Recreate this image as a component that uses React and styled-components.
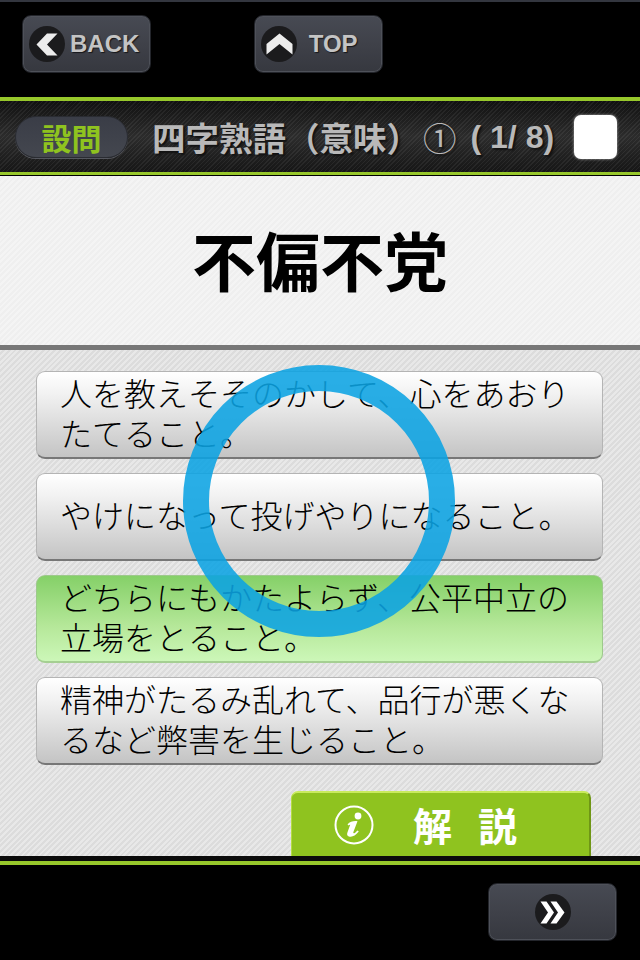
import React from 'react';
import styled, { createGlobalStyle } from 'styled-components';

const GlobalStyle = createGlobalStyle`
  html, body {
    margin: 0;
    padding: 0;
    background: #000;
  }
  * {
    box-sizing: border-box;
  }
`;

const JP = `"Noto Sans CJK JP", "Liberation Sans", sans-serif`;

const Screen = styled.div`
  position: relative;
  width: 640px;
  height: 960px;
  display: flex;
  flex-direction: column;
  overflow: hidden;
  background: #000;
  font-family: ${JP};
`;

const TopBar = styled.div`
  height: 97px;
  flex: none;
  display: flex;
  gap: 103px;
  padding: 13px 0 0 22px;
  background: #000;
  border-top: 2px solid #33363f;
`;

const NavButton = styled.div`
  width: 129px;
  height: 58px;
  display: flex;
  align-items: center;
  justify-content: ${(p) => (p.$center ? 'center' : 'flex-start')};
  gap: 5px;
  padding-left: ${(p) => (p.$center ? '0' : '6px')};
  border-radius: 9px;
  border: 1px solid #23252b;
  background: linear-gradient(#474a53, #3f4149 50%, #36383f);
  box-shadow: inset 0 0 0 1px #4e5159;
`;

const NavDisc = styled.span`
  width: 36px;
  height: 36px;
  flex: none;
  display: flex;
  align-items: center;
  justify-content: center;
  border-radius: 50%;
  background: #1b1b1d;
`;

const NavLabel = styled.span`
  font-family: "Liberation Sans", sans-serif;
  font-size: 24px;
  font-weight: 700;
  color: #c4c4c4;
  text-shadow: 1px 1px 1px #16171a;
`;

const GreenRule = styled.div`
  height: ${(p) => p.$h || 3}px;
  flex: none;
  background: #97c72b;
`;

const Header = styled.div`
  height: 71px;
  flex: none;
  display: flex;
  align-items: center;
  padding: 0 23px 0 15px;
  background:
    repeating-linear-gradient(135deg, rgba(255, 255, 255, 0.06) 0 1px, transparent 1px 3px),
    linear-gradient(#111, #2c2c2c 50%, #161616);
`;

const Pill = styled.span`
  width: 113px;
  height: 42px;
  flex: none;
  display: flex;
  align-items: center;
  justify-content: center;
  border-radius: 21px;
  border: 1px solid #2a2c32;
  background: linear-gradient(#3a3d47, #44474f);
  box-shadow: 0 1px 0 #55575e;
  color: #8fc31f;
  font-size: 30px;
  font-weight: 700;
  line-height: 1;
`;

const HeaderTitle = styled.span`
  margin-left: 24px;
  flex: 1;
  display: flex;
  align-items: center;
  white-space: nowrap;
  font-size: 33.5px;
  font-weight: 700;
  line-height: 1;
  color: #b9b9b9;
  text-shadow: 2px 2px 2px #111;
`;

const CircledNumber = styled.span`
  margin-left: 3px;
  font-weight: 400;
`;

const Counter = styled.span`
  margin-left: 14px;
  font-family: "Liberation Sans", sans-serif;
  font-size: 32px;
`;

const CheckBox = styled.span`
  width: 43px;
  height: 44px;
  flex: none;
  border-radius: 7px;
  background: #fff;
  box-shadow: 0 0 3px rgba(255, 255, 255, 0.6);
`;

const HeaderGap = styled.div`
  height: 1px;
  flex: none;
  background: #000;
`;

const Question = styled.div`
  height: 174px;
  flex: none;
  display: flex;
  align-items: center;
  justify-content: center;
  padding-bottom: 6px;
  border-bottom: 5px solid #777;
  background: repeating-linear-gradient(135deg, #f4f4f4 0 2px, #efefef 2px 4px);
  font-size: 64px;
  font-weight: 700;
  line-height: 1;
  color: #000;
`;

const Content = styled.div`
  flex: 1;
  display: flex;
  flex-direction: column;
  padding: 21px 36px 0;
  background: repeating-linear-gradient(135deg, #e8e8e8 0 2px, #dcdcdc 2px 4px);
`;

const AnswerList = styled.div`
  display: flex;
  flex-direction: column;
  gap: 14px;
`;

const Answer = styled.div`
  width: 567px;
  height: 88px;
  display: flex;
  align-items: center;
  padding: 0 22px 6px 23px;
  border-radius: 9px;
  border: 1px solid ${(p) => (p.$correct ? '#9dc98b' : '#b4b4b4')};
  border-bottom: 2px solid ${(p) => (p.$correct ? '#a5cf92' : '#777')};
  background: ${(p) =>
    p.$correct
      ? 'linear-gradient(#85d068, #b6e89a 60%, #ccf7b8)'
      : 'linear-gradient(#fff, #f2f2f2 25%, #c4c4c4)'};
  font-size: 32px;
  font-weight: 300;
  line-height: 40px;
  color: #000;
`;

const ExplainButton = styled.div`
  width: 300px;
  height: 65px;
  margin: 26px 0 0 255px;
  display: flex;
  align-items: center;
  padding: 0 0 0 42px;
  border-radius: 7px 7px 0 0;
  border-top: 2px solid #c9ea5e;
  border-left: 1px solid #b4dc42;
  border-right: 2px solid #6f9615;
  background: #8fc31f;
  color: #fff;
`;

const ExplainLabel = styled.span`
  margin-left: 39px;
  font-size: 39px;
  font-weight: 700;
  line-height: 1;
  letter-spacing: 26px;
`;

const BlackRule = styled.div`
  height: 5px;
  flex: none;
  background: #0b0b0b;
`;

const BottomBar = styled.div`
  flex: 1;
  display: flex;
  justify-content: flex-end;
  padding: 18px 23px 0 0;
  background: #000;
`;

const Ring = styled.svg`
  position: absolute;
  left: 183px;
  top: 365px;
  width: 272px;
  height: 272px;
  pointer-events: none;
`;

function ChevronLeft() {
  return (
    <svg width="22" height="23" viewBox="0 0 22 23">
      <path d="M11 0.5 H21.5 L11 11.5 L21.5 22.5 H11 L0.5 11.5 Z" fill="#ececec" />
    </svg>
  );
}

function ChevronUp() {
  return (
    <svg width="27" height="22" viewBox="0 0 27 22">
      <path d="M13.5 0.5 L26.5 11 V21.5 L13.5 11 L0.5 21.5 V11 Z" fill="#ececec" />
    </svg>
  );
}

function ChevronsRight() {
  return (
    <svg width="25" height="23" viewBox="0 0 25 23">
      <path d="M0.5 0.5 H6.5 L14 11.5 L6.5 22.5 H0.5 L8 11.5 Z M10.5 0.5 H16.5 L24.5 11.5 L16.5 22.5 H10.5 L18 11.5 Z" fill="#fff" />
    </svg>
  );
}

function InfoIcon() {
  return (
    <svg width="40" height="40" viewBox="0 0 40 40">
      <circle cx="20" cy="20" r="18.5" fill="none" stroke="#fff" strokeWidth="2" />
      <circle cx="24" cy="11" r="3.4" fill="#fff" />
      <path
        d="M13.5 19.5 C16 16.5 19.5 15.8 23.5 16.2 L19.4 27 C18.9 28.8 20.4 28.8 23.4 25.4 L24.8 26.6 C21 31.4 17.6 32.4 14.8 31.4 C12.8 30.6 12.9 28.8 13.5 27.2 L16.2 19.8 C15.6 19.6 15 20 14.7 20.5 Z"
        fill="#fff"
      />
    </svg>
  );
}

const answers = [
  { id: 1, text: '人を教えそそのかして、心をあおりたてること。' },
  { id: 2, text: 'やけになって投げやりになること。' },
  { id: 3, text: 'どちらにもかたよらず、公平中立の立場をとること。', correct: true },
  { id: 4, text: '精神がたるみ乱れて、品行が悪くなるなど弊害を生じること。' },
];

export default function App() {
  return (
    <>
      <GlobalStyle />
      <Screen>
        <TopBar>
          <NavButton>
            <NavDisc>
              <ChevronLeft />
            </NavDisc>
            <NavLabel>BACK</NavLabel>
          </NavButton>
          <NavButton>
            <NavDisc>
              <ChevronUp />
            </NavDisc>
            <NavLabel>&nbsp;TOP</NavLabel>
          </NavButton>
        </TopBar>
        <GreenRule $h={4} />
        <Header>
          <Pill>設問</Pill>
          <HeaderTitle>
            四字熟語（意味）
            <CircledNumber>①</CircledNumber>
            <Counter>( 1/ 8)</Counter>
          </HeaderTitle>
          <CheckBox />
        </Header>
        <GreenRule />
        <HeaderGap />
        <Question>不偏不党</Question>
        <Content>
          <AnswerList>
            {answers.map((a) => (
              <Answer key={a.id} $correct={a.correct}>
                {a.text}
              </Answer>
            ))}
          </AnswerList>
          <ExplainButton>
            <InfoIcon />
            <ExplainLabel>解説</ExplainLabel>
          </ExplainButton>
        </Content>
        <BlackRule />
        <GreenRule $h={4} />
        <BottomBar>
          <NavButton $center>
            <NavDisc>
              <ChevronsRight />
            </NavDisc>
          </NavButton>
        </BottomBar>
        <Ring viewBox="0 0 272 272">
          <circle cx="136" cy="136" r="123" fill="none" stroke="#0ba3e3" strokeOpacity="0.88" strokeWidth="26" />
        </Ring>
      </Screen>
    </>
  );
}
